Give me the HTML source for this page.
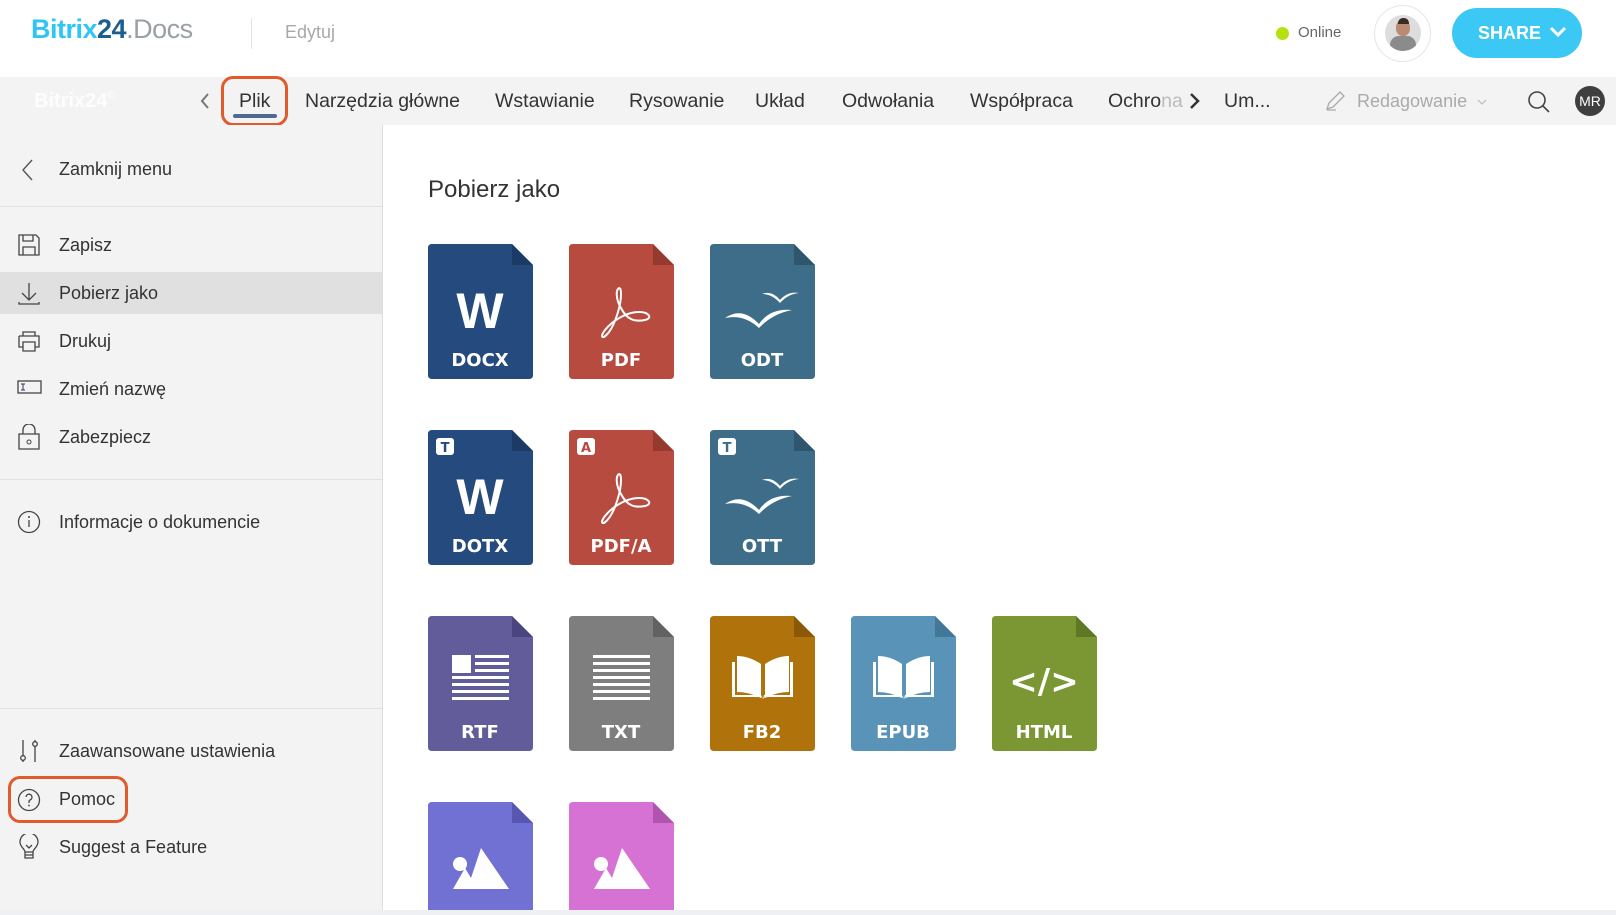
<!DOCTYPE html>
<html style="overflow:hidden;height:915px"><head><meta charset="utf-8"><style>
*{margin:0;padding:0;box-sizing:border-box}
body{width:1616px;height:915px;overflow:hidden;background:#fff;font-family:"Liberation Sans",sans-serif;position:relative;color:#333}
.a{position:absolute;white-space:nowrap}
.tab{position:absolute;top:89px;font-size:19.5px;color:#333;line-height:24px}
.side{position:absolute;left:0;top:125px;width:383px;height:785px;background:#f3f3f3;border-right:1px solid #ddd}
.it{position:absolute;left:59px;font-size:18px;color:#333;line-height:22px}
.hr{position:absolute;left:0;width:382px;height:1px;background:#e2e2e2}
.ic{position:absolute;left:17px}
.f{position:absolute;width:105px;height:135px}
.clip{position:absolute;width:105px;height:108px;overflow:hidden}
.clip svg{position:absolute;left:0;top:0;width:105px;height:135px}
</style></head><body>
<!-- header -->
<div class="a" style="left:31px;top:14px;font-size:27px;font-weight:bold;letter-spacing:-0.5px"><span style="color:#2fc6f6">Bitrix</span><span style="color:#1c5e8e">24</span><span style="color:#9aa0a6;font-weight:normal">.Docs</span></div>
<div class="a" style="left:251px;top:18px;width:1px;height:31px;background:#e3e3e3"></div>
<div class="a" style="left:285px;top:22px;font-size:18px;color:#a8a8a8">Edytuj</div>
<div class="a" style="left:1276px;top:27px;width:13px;height:13px;border-radius:50%;background:#b5e20f"></div>
<div class="a" style="left:1298px;top:24px;font-size:15px;color:#666">Online</div>
<div class="a" style="left:1374px;top:5px;width:57px;height:57px;border-radius:50%;border:1px solid #e5e5e5;background:#fff"></div>
<div class="a" style="left:1385px;top:15px;width:36px;height:36px;border-radius:50%;background:#ddd;overflow:hidden"><div style="position:absolute;left:11px;top:5px;width:14px;height:16px;border-radius:45%;background:#b88b72"></div><div style="position:absolute;left:13px;top:3px;width:11px;height:6px;border-radius:5px 5px 0 0;background:#3a2a22"></div><div style="position:absolute;left:5px;top:21px;width:26px;height:20px;border-radius:9px 9px 0 0;background:#8b8b8b"></div></div>
<div class="a" style="left:1452px;top:8px;width:130px;height:50px;border-radius:25px;background:#3bc8f5;color:#fff;font-weight:bold;font-size:18px;line-height:50px;padding-left:26px">SHARE <svg width="18" height="12" viewBox="0 0 18 12" style="vertical-align:1px;margin-left:3px"><path d="M2 2l7 7 7-7" fill="none" stroke="#fff" stroke-width="3"/></svg></div>
<!-- toolbar -->
<div class="a" style="left:0;top:77px;width:1616px;height:48px;background:#f3f3f3"></div>
<div class="a" style="left:34px;top:90px;font-size:20px;font-weight:bold;color:#fff;opacity:.9">Bitrix24<span style="font-size:11px;vertical-align:8px;font-weight:normal">©</span></div>
<svg class="a" style="left:199px;top:92px" width="12" height="18"><path d="M9 2L3 9l6 7" fill="none" stroke="#777" stroke-width="2"/></svg>
<div class="tab" style="left:239px">Plik</div>
<div class="a" style="left:233px;top:114px;width:44px;height:4px;border-radius:2px;background:#4f6a8f"></div>
<div class="a" style="left:221px;top:76px;width:67px;height:50px;border:3px solid #e05a2b;border-radius:12px"></div>
<div class="tab" style="left:305px">Narzędzia główne</div>
<div class="tab" style="left:495px">Wstawianie</div>
<div class="tab" style="left:629px">Rysowanie</div>
<div class="tab" style="left:755px">Układ</div>
<div class="tab" style="left:842px">Odwołania</div>
<div class="tab" style="left:970px">Współpraca</div>
<div class="tab" style="left:1108px">Ochro<span style="color:#bbb">na</span></div>
<svg class="a" style="left:1188px;top:92px" width="14" height="18"><path d="M3 2l7 7-7 7" fill="none" stroke="#333" stroke-width="2.5"/></svg>
<div class="tab" style="left:1224px">Um...</div>
<svg class="a" style="left:1324px;top:90px" width="22" height="22"><path d="M3 19l2-6L16 2l4 4L9 17z M3 20h9" fill="none" stroke="#aaa" stroke-width="1.3"/></svg>
<div class="a" style="left:1357px;top:91px;font-size:18px;color:#aaa">Redagowanie</div>
<svg class="a" style="left:1477px;top:98px" width="10" height="8"><path d="M1 2l4 4 4-4" fill="none" stroke="#bbb" stroke-width="1.2"/></svg>
<svg class="a" style="left:1527px;top:90px" width="24" height="24"><circle cx="10" cy="10" r="8" fill="none" stroke="#444" stroke-width="1.6"/><path d="M16 16l6 6" stroke="#444" stroke-width="1.6"/></svg>
<div class="a" style="left:1575px;top:86px;width:30px;height:30px;border-radius:50%;background:#3f3f3f;color:#fff;font-size:14px;line-height:30px;text-align:center">MR</div>
<!-- sidebar -->
<div class="side"></div>
<svg class="a" style="left:20px;top:158px" width="16" height="24"><path d="M12 2L3 12l9 10" fill="none" stroke="#555" stroke-width="1.4"/></svg>
<div class="it" style="top:158px">Zamknij menu</div>
<div class="hr" style="top:206px"></div>
<div class="a" style="left:0;top:272px;width:382px;height:42px;background:#e0e0e0"></div>
<svg class="ic" style="top:233px" width="24" height="24"><path d="M2 2h17l3 3v17H2z M6 2v6h10V2 M6 22v-8h12v8" fill="none" stroke="#444" stroke-width="1.3"/></svg>
<div class="it" style="top:234px">Zapisz</div>
<svg class="ic" style="top:281px" width="24" height="24"><path d="M12 2v17 M5 12l7 7 7-7 M2 21v2h20v-2" fill="none" stroke="#444" stroke-width="1.3"/></svg>
<div class="it" style="top:282px">Pobierz jako</div>
<svg class="ic" style="top:329px" width="24" height="24"><path d="M6 7V3h12v4 M2 7h20v11h-4 M6 18H2V7 M6 13h12v9H6z" fill="none" stroke="#444" stroke-width="1.3"/></svg>
<div class="it" style="top:330px">Drukuj</div>
<svg class="ic" style="top:380px" width="25" height="14"><rect x="1" y="1" width="23" height="12" fill="none" stroke="#444" stroke-width="1.3"/><path d="M4 4h4M6 4v6M4 10h4" stroke="#335" stroke-width="1"/></svg>
<div class="it" style="top:378px">Zmień nazwę</div>
<svg class="ic" style="top:424px" width="24" height="26"><path d="M6 10V6a6 6 0 0 1 12 0v4 M2 10h20v15H2z" fill="none" stroke="#444" stroke-width="1.3"/><circle cx="12" cy="18" r="2" fill="none" stroke="#444"/></svg>
<div class="it" style="top:426px">Zabezpiecz</div>
<div class="hr" style="top:479px"></div>
<svg class="ic" style="top:510px" width="24" height="24"><circle cx="12" cy="12" r="10.5" fill="none" stroke="#444" stroke-width="1.3"/><path d="M12 10v7" stroke="#444" stroke-width="1.3"/><circle cx="12" cy="7" r="1" fill="#444"/></svg>
<div class="it" style="top:511px">Informacje o dokumencie</div>
<div class="hr" style="top:708px"></div>
<svg class="ic" style="top:738px" width="24" height="26"><path d="M6 2v16 M6 22v2 M18 2v2 M18 8v16" stroke="#444" stroke-width="1.3"/><circle cx="6" cy="20" r="2.3" fill="none" stroke="#444" stroke-width="1.3"/><circle cx="18" cy="6" r="2.3" fill="none" stroke="#444" stroke-width="1.3"/></svg>
<div class="it" style="top:740px">Zaawansowane ustawienia</div>
<svg class="ic" style="top:788px" width="24" height="24"><circle cx="12" cy="12" r="10.5" fill="none" stroke="#444" stroke-width="1.3"/><path d="M9 9a3 3 0 1 1 4 3c-1 .5-1 1-1 3" fill="none" stroke="#444" stroke-width="1.3"/><circle cx="12" cy="17.5" r=".9" fill="#444"/></svg>
<div class="it" style="top:788px">Pomoc</div>
<div class="a" style="left:8px;top:776px;width:120px;height:47px;border:3px solid #e05a2b;border-radius:12px"></div>
<svg class="ic" style="top:834px" width="24" height="28"><path d="M8 18c0-3-5-5-5-10a9 9 0 0 1 18 0c0 5-5 7-5 10z M8 18h8v6H8z M8 21h8 M9 11l3 3 3-3" fill="none" stroke="#444" stroke-width="1.3"/></svg>
<div class="it" style="top:836px">Suggest a Feature</div>
<!-- content -->
<div class="a" style="left:428px;top:176px;font-size:24px;color:#333">Pobierz jako</div>

<svg width="0" height="0" style="position:absolute"><defs>
<path id="body" d="M0 4Q0 0 4 0H84L105 21V131Q105 135 101 135H4Q0 135 0 131Z"/>
<path id="fold" d="M84 0V21H105Z"/>
<path id="acro" fill="none" stroke="#fff" stroke-width="2" d="M51 44C46 44 47 56 52 64C58 76 66 78 76 76C84 74 80 68 70 68C58 68 44 76 36 86C30 94 34 96 40 88C46 80 52 62 52 50C52 46 51 44 51 44"/>
<g id="bird" fill="#fff"><path d="M15 74Q32 62 49 80Q60 64 82 66Q62 70 49 84Q34 70 15 74Z"/><path d="M52 50Q62 46 70 56Q78 47 89 49Q78 50 70 59Q62 50 52 50Z"/></g>
<g id="img" fill="#fff"><circle cx="32" cy="62" r="7"/><path d="M25 87L37 66L43 76L53 46L81 87Z"/></g>
</defs></svg>

<!-- row 1 -->
<svg class="f" style="left:428px;top:244px" viewBox="0 0 105 135"><use href="#body" fill="#254a7d"/><use href="#fold" fill="#1b3a66"/><text x="52" y="84" fill="#fff" font-size="50" font-weight="bold" font-family="Liberation Sans" text-anchor="middle">W</text><text x="52" y="122" fill="#fff" font-size="18" font-weight="bold" font-family="DejaVu Sans" text-anchor="middle">DOCX</text></svg>
<svg class="f" style="left:569px;top:244px" viewBox="0 0 105 135"><use href="#body" fill="#b84b3f"/><use href="#fold" fill="#963a30"/><use href="#acro"/><text x="52" y="122" fill="#fff" font-size="18" font-weight="bold" font-family="DejaVu Sans" text-anchor="middle">PDF</text></svg>
<svg class="f" style="left:710px;top:244px" viewBox="0 0 105 135"><use href="#body" fill="#3e6d8a"/><use href="#fold" fill="#2f566f"/><use href="#bird"/><text x="52" y="122" fill="#fff" font-size="18" font-weight="bold" font-family="DejaVu Sans" text-anchor="middle">ODT</text></svg>
<!-- row 2 -->
<svg class="f" style="left:428px;top:430px" viewBox="0 0 105 135"><use href="#body" fill="#254a7d"/><use href="#fold" fill="#1b3a66"/><rect x="8" y="8" width="18" height="17" rx="3" fill="#fff"/><text x="17" y="22" fill="#254a7d" font-size="13" font-weight="bold" font-family="DejaVu Sans" text-anchor="middle">T</text><text x="52" y="84" fill="#fff" font-size="50" font-weight="bold" font-family="Liberation Sans" text-anchor="middle">W</text><text x="52" y="122" fill="#fff" font-size="18" font-weight="bold" font-family="DejaVu Sans" text-anchor="middle">DOTX</text></svg>
<svg class="f" style="left:569px;top:430px" viewBox="0 0 105 135"><use href="#body" fill="#b84b3f"/><use href="#fold" fill="#963a30"/><rect x="8" y="8" width="18" height="17" rx="3" fill="#fff"/><text x="17" y="22" fill="#b84b3f" font-size="13" font-weight="bold" font-family="DejaVu Sans" text-anchor="middle">A</text><use href="#acro"/><text x="52" y="122" fill="#fff" font-size="18" font-weight="bold" font-family="DejaVu Sans" text-anchor="middle">PDF/A</text></svg>
<svg class="f" style="left:710px;top:430px" viewBox="0 0 105 135"><use href="#body" fill="#3e6d8a"/><use href="#fold" fill="#2f566f"/><rect x="8" y="8" width="18" height="17" rx="3" fill="#fff"/><text x="17" y="22" fill="#3e6d8a" font-size="13" font-weight="bold" font-family="DejaVu Sans" text-anchor="middle">T</text><use href="#bird"/><text x="52" y="122" fill="#fff" font-size="18" font-weight="bold" font-family="DejaVu Sans" text-anchor="middle">OTT</text></svg>
<!-- row 3 -->
<svg class="f" style="left:428px;top:616px" viewBox="0 0 105 135"><use href="#body" fill="#625c9a"/><use href="#fold" fill="#4a4580"/><g fill="#fff"><rect x="24" y="39" width="19" height="18"/><rect x="47" y="39" width="34" height="3"/><rect x="47" y="46" width="34" height="3"/><rect x="47" y="53" width="34" height="3"/><rect x="24" y="60" width="57" height="3"/><rect x="24" y="67" width="57" height="3"/><rect x="24" y="74" width="57" height="3"/><rect x="24" y="81" width="57" height="3"/></g><text x="52" y="122" fill="#fff" font-size="18" font-weight="bold" font-family="DejaVu Sans" text-anchor="middle">RTF</text></svg>
<svg class="f" style="left:569px;top:616px" viewBox="0 0 105 135"><use href="#body" fill="#7e7e7e"/><use href="#fold" fill="#626262"/><g fill="#fff"><rect x="24" y="39" width="57" height="3"/><rect x="24" y="46" width="57" height="3"/><rect x="24" y="53" width="57" height="3"/><rect x="24" y="60" width="57" height="3"/><rect x="24" y="67" width="57" height="3"/><rect x="24" y="74" width="57" height="3"/><rect x="24" y="81" width="57" height="3"/></g><text x="52" y="122" fill="#fff" font-size="18" font-weight="bold" font-family="DejaVu Sans" text-anchor="middle">TXT</text></svg>
<svg class="f" style="left:710px;top:616px" viewBox="0 0 105 135"><use href="#body" fill="#b0720a"/><use href="#fold" fill="#8a5806"/><g fill="#fff"><path d="M27 40q12 0 24 8v34q-12-6-24-6z M79 40q-12 0-24 8v34q12-6 24-6z"/><path d="M22 46h3v33h26l2 4-2-2H22z M83 46h-3v33H54l-1 4 2-2h28z"/></g><text x="52" y="122" fill="#fff" font-size="18" font-weight="bold" font-family="DejaVu Sans" text-anchor="middle">FB2</text></svg>
<svg class="f" style="left:851px;top:616px" viewBox="0 0 105 135"><use href="#body" fill="#5993b8"/><use href="#fold" fill="#437797"/><g fill="#fff"><path d="M27 40q12 0 24 8v34q-12-6-24-6z M79 40q-12 0-24 8v34q12-6 24-6z"/><path d="M22 46h3v33h26l2 4-2-2H22z M83 46h-3v33H54l-1 4 2-2h28z"/></g><text x="52" y="122" fill="#fff" font-size="18" font-weight="bold" font-family="DejaVu Sans" text-anchor="middle">EPUB</text></svg>
<svg class="f" style="left:992px;top:616px" viewBox="0 0 105 135"><use href="#body" fill="#7a9733"/><use href="#fold" fill="#5e7826"/><text x="52" y="77" fill="#fff" font-size="34" font-weight="bold" font-family="DejaVu Sans" text-anchor="middle">&lt;/&gt;</text><text x="52" y="122" fill="#fff" font-size="18" font-weight="bold" font-family="DejaVu Sans" text-anchor="middle">HTML</text></svg>
<!-- row 4 (clipped) -->
<div class="clip" style="left:428px;top:802px"><svg viewBox="0 0 105 135"><use href="#body" fill="#7170d3"/><use href="#fold" fill="#5756b0"/><use href="#img"/></svg></div>
<div class="clip" style="left:569px;top:802px"><svg viewBox="0 0 105 135"><use href="#body" fill="#d672d4"/><use href="#fold" fill="#b055ae"/><use href="#img"/></svg></div>
<div class="a" style="left:0;top:910px;width:1616px;height:5px;background:#eef0f3;z-index:5"></div>
</body></html>
